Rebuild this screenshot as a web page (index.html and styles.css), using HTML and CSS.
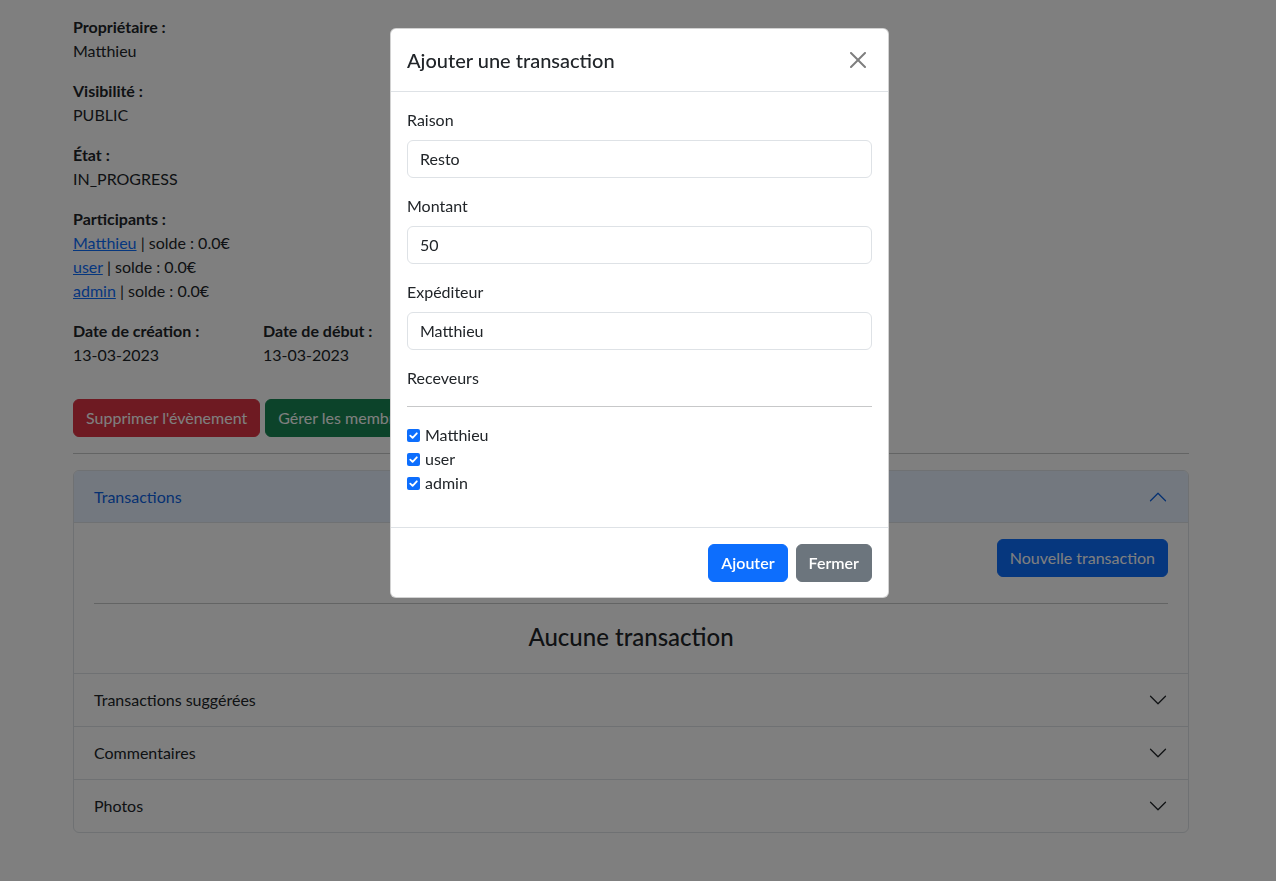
FILE: index.html
```html
<!DOCTYPE html>
<html lang="fr">
<head>
<meta charset="utf-8">
<title>Évènement</title>
<link rel="stylesheet" href="styles.css">
</head>
<body>
<main class="container">
  <div class="field">
    <div class="field-label">Propriétaire :</div>
    <div>Matthieu</div>
  </div>
  <div class="field">
    <div class="field-label">Visibilité :</div>
    <div>PUBLIC</div>
  </div>
  <div class="field">
    <div class="field-label">État :</div>
    <div>IN_PROGRESS</div>
  </div>
  <div class="field">
    <div class="field-label">Participants :</div>
    <div><a href="#">Matthieu</a> | solde : 0.0€</div>
    <div><a href="#">user</a> | solde : 0.0€</div>
    <div><a href="#">admin</a> | solde : 0.0€</div>
  </div>
  <div class="dates">
    <div class="date-col">
      <div class="field-label">Date de création :</div>
      <div>13-03-2023</div>
    </div>
    <div class="date-col">
      <div class="field-label">Date de début :</div>
      <div>13-03-2023</div>
    </div>
  </div>
  <div class="actions">
    <button class="btn btn-danger">Supprimer l'évènement</button>
    <button class="btn btn-success">Gérer les membres</button>
  </div>
  <hr class="sep">
  <div class="accordion">
    <div class="acc-item">
      <div class="acc-header active">
        <span>Transactions</span>
        <svg class="chev" viewBox="0 0 16 16" width="20" height="20"><path d="M2 11L8 5L14 11" fill="none" stroke="#0c63e4" stroke-width="1" stroke-linecap="round" stroke-linejoin="round"/></svg>
      </div>
      <div class="acc-body">
        <div class="acc-tools">
          <button class="btn btn-primary">Nouvelle transaction</button>
        </div>
        <hr class="body-sep">
        <h4 class="empty">Aucune transaction</h4>
      </div>
    </div>
    <div class="acc-item">
      <div class="acc-header">
        <span>Transactions suggérées</span>
        <svg class="chev" viewBox="0 0 16 16" width="20" height="20"><path d="M2 5L8 11L14 5" fill="none" stroke="#212529" stroke-width="1" stroke-linecap="round" stroke-linejoin="round"/></svg>
      </div>
    </div>
    <div class="acc-item">
      <div class="acc-header">
        <span>Commentaires</span>
        <svg class="chev" viewBox="0 0 16 16" width="20" height="20"><path d="M2 5L8 11L14 5" fill="none" stroke="#212529" stroke-width="1" stroke-linecap="round" stroke-linejoin="round"/></svg>
      </div>
    </div>
    <div class="acc-item">
      <div class="acc-header">
        <span>Photos</span>
        <svg class="chev" viewBox="0 0 16 16" width="20" height="20"><path d="M2 5L8 11L14 5" fill="none" stroke="#212529" stroke-width="1" stroke-linecap="round" stroke-linejoin="round"/></svg>
      </div>
    </div>
  </div>
</main>

<div class="backdrop"></div>

<div class="modal">
  <div class="modal-header">
    <h5 class="modal-title">Ajouter une transaction</h5>
    <svg class="close" viewBox="0 0 16 16" width="16" height="16"><path d="M.293.293a1 1 0 0 1 1.414 0L8 6.586 14.293.293a1 1 0 1 1 1.414 1.414L9.414 8l6.293 6.293a1 1 0 0 1-1.414 1.414L8 9.414l-6.293 6.293a1 1 0 0 1-1.414-1.414L6.586 8 .293 1.707a1 1 0 0 1 0-1.414z" fill="#000"/></svg>
  </div>
  <div class="modal-body">
    <label class="form-label">Raison</label>
    <div class="form-control">Resto</div>
    <label class="form-label">Montant</label>
    <div class="form-control">50</div>
    <label class="form-label">Expéditeur</label>
    <div class="form-control">Matthieu</div>
    <label class="form-label">Receveurs</label>
    <hr class="modal-sep">
    <div class="checks">
      <label class="check"><span class="box"><svg viewBox="0 0 12 12" width="11" height="11"><path d="M2.5 6.2L5 8.6L9.6 3.6" fill="none" stroke="#fff" stroke-width="2" stroke-linecap="round" stroke-linejoin="round"/></svg></span>Matthieu</label>
      <label class="check"><span class="box"><svg viewBox="0 0 12 12" width="11" height="11"><path d="M2.5 6.2L5 8.6L9.6 3.6" fill="none" stroke="#fff" stroke-width="2" stroke-linecap="round" stroke-linejoin="round"/></svg></span>user</label>
      <label class="check"><span class="box"><svg viewBox="0 0 12 12" width="11" height="11"><path d="M2.5 6.2L5 8.6L9.6 3.6" fill="none" stroke="#fff" stroke-width="2" stroke-linecap="round" stroke-linejoin="round"/></svg></span>admin</label>
    </div>
  </div>
  <div class="modal-footer">
    <button class="btn btn-primary btn-strong">Ajouter</button>
    <button class="btn btn-secondary btn-strong">Fermer</button>
  </div>
</div>
</body>
</html>
```

FILE: styles.css
```css
* { box-sizing: border-box; }

html, body {
  margin: 0;
  height: 100%;
}

body {
  font-family: Lato, "Noto Sans", sans-serif;
  font-size: 16px;
  line-height: 24px;
  color: #212529;
  background: #fff;
  padding-right: 14px;
  overflow: hidden;
}

.container {
  max-width: 1140px;
  margin: 0 auto;
  padding: 15px 12px 0;
}

.field {
  margin-bottom: 16px;
}

.field-label {
  font-weight: 700;
}

a {
  color: #0d6efd;
  text-decoration: underline;
}

.dates {
  display: flex;
  margin-bottom: 32px;
}

.date-col {
  width: 190px;
}

.actions {
  display: flex;
  gap: 5px;
}

.btn {
  font-family: inherit;
  font-size: 16px;
  line-height: 24px;
  padding: 6px 12px;
  border: 1px solid transparent;
  border-radius: 6px;
  color: #fff;
  cursor: pointer;
}

.btn-danger { background: #dc3545; border-color: #dc3545; }
.btn-success { background: #198754; border-color: #198754; }
.btn-primary { background: #0d6efd; border-color: #0d6efd; }
.btn-secondary { background: #6c757d; border-color: #6c757d; }
.btn-strong { font-weight: 600; }

.sep {
  margin: 16px 0;
  border: 0;
  border-top: 1px solid #212529;
  opacity: 0.25;
}

.accordion {
  border: 1px solid #dee2e6;
  border-radius: 6px;
  overflow: hidden;
}

.acc-item + .acc-item {
  border-top: 1px solid #dee2e6;
}

.acc-header {
  display: flex;
  align-items: center;
  justify-content: space-between;
  height: 52px;
  padding: 0 20px;
  color: #212529;
}

.acc-header.active {
  background: #e7f1ff;
  color: #0c63e4;
  box-shadow: inset 0 -1px 0 #dee2e6;
}

.chev { display: block; }

.acc-body {
  padding: 16px 20px 22px;
}

.acc-tools {
  display: flex;
  justify-content: flex-end;
}

.body-sep {
  margin: 26px 0 18px;
  border: 0;
  border-top: 1px solid #212529;
  opacity: 0.25;
}

.empty {
  margin: 0;
  text-align: center;
  font-size: 24px;
  line-height: 29px;
  font-weight: 500;
}

.backdrop {
  position: fixed;
  inset: 0;
  background: rgba(0, 0, 0, 0.5);
}

.modal {
  position: fixed;
  top: 28px;
  left: calc(50% - 248px);
  width: 499px;
  background: #fff;
  border: 1px solid rgba(0, 0, 0, 0.175);
  border-radius: 6px;
}

.modal-header {
  display: flex;
  align-items: center;
  justify-content: space-between;
  padding: 16px;
  border-bottom: 1px solid #dee2e6;
}

.modal-title {
  margin: 0;
  font-size: 20px;
  line-height: 30px;
  font-weight: 500;
}

.close {
  opacity: 0.5;
  margin-right: 6px;
  display: block;
}

.modal-body {
  padding: 16px 16px 32px;
}

.form-label {
  display: block;
  margin-bottom: 8px;
}

.form-control {
  height: 38px;
  padding: 6px 12px;
  border: 1px solid #dee2e6;
  border-radius: 6px;
  margin-bottom: 16px;
}

.modal-sep {
  margin: 16px 0;
  border: 0;
  border-top: 1px solid #212529;
  opacity: 0.25;
}

.checks {
  display: flex;
  flex-direction: column;
}

.check {
  display: flex;
  align-items: center;
  height: 24px;
}

.box {
  width: 13px;
  height: 13px;
  border-radius: 2px;
  background: #0d6efd;
  margin-right: 5px;
  display: flex;
  align-items: center;
  justify-content: center;
}

.box svg { display: block; }

.modal-footer {
  display: flex;
  justify-content: flex-end;
  gap: 8px;
  padding: 16px 16px 15px;
  border-top: 1px solid #dee2e6;
}
```
